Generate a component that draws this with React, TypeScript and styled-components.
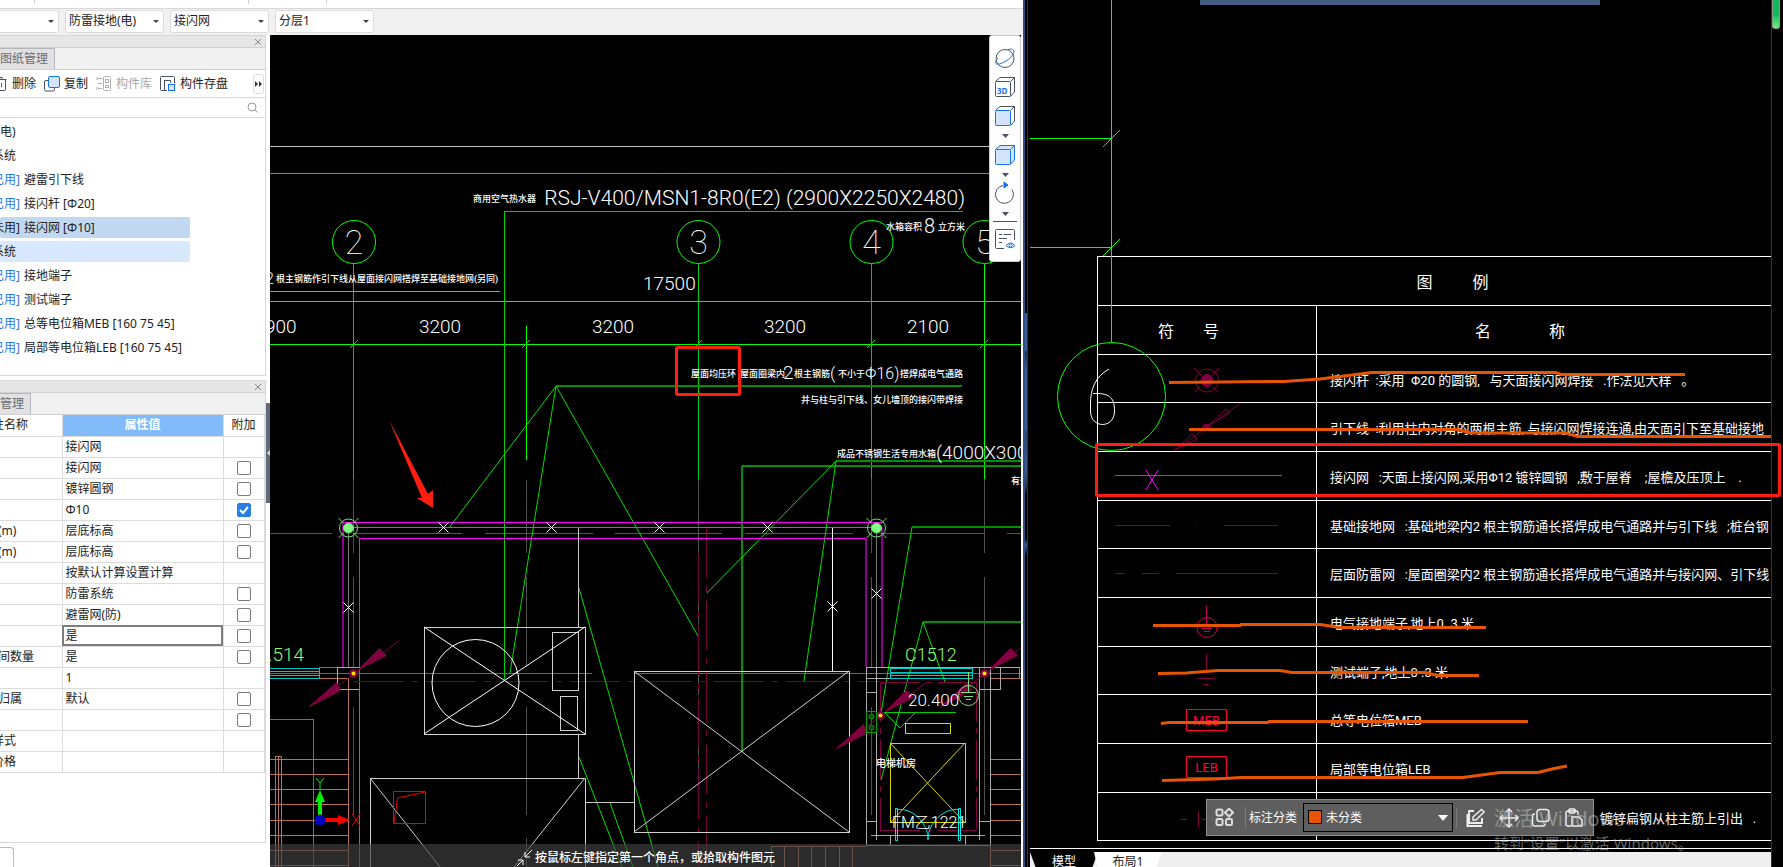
import React from "react";
import styled, { createGlobalStyle, css } from "styled-components";

const UI = `"Noto Sans", "Noto Sans CJK SC", sans-serif`;
const CAD = `Roboto, "Noto Sans CJK SC", sans-serif`;
const G = "#00ff00";
const GD = "#009000";
const GM = "#00c000";

const GlobalStyle = createGlobalStyle`
  * { box-sizing: border-box; }
  body { margin: 0; background: #000; font: 12px/16px ${UI}; color: #222; overflow: hidden; }
  button, select, input { font: inherit; color: inherit; margin: 0; padding: 0; }
`;

const Desktop = styled.div`
  display: grid;
  grid-template-columns: minmax(0, 1023fr) 5px minmax(0, 743fr) 12px;
  height: 100vh;
  overflow: hidden;
  background: #000;
  position: relative;
`;

/* ---------- modelling application ---------- */

const Modeler = styled.section`
  display: grid;
  grid-template-rows: 35px minmax(0, 1fr);
  min-width: 0;
  background: #fff;
`;

const TopBar = styled.header`
  display: flex;
  flex-direction: column;
  background: #f1f1f1;
`;

const RibbonEdge = styled.div`
  display: flex;
  height: 9px;
  background: #fff;
  border-bottom: 1px solid #d6d6d6;
`;

const RibbonCell = styled.span<{ $w: number }>`
  width: ${(p) => p.$w}px;
  height: 4px;
  border-right: 1px solid #cfcfcf;
`;

const FilterRow = styled.div`
  display: flex;
  gap: 6px;
  padding-top: 1px;
  margin-left: -40px;
`;

const Field = styled.label`
  position: relative;
  display: block;
`;

const Select = styled.select`
  appearance: none;
  width: 99px;
  height: 23px;
  padding: 0 16px 1px 3px;
  border: 1px solid #dcdcdc;
  border-radius: 3px;
  background: #fff;
`;

const Caret = styled.i<{ $top?: number }>`
  position: absolute;
  right: 5px;
  top: ${(p) => p.$top ?? 10}px;
  border: 3px solid transparent;
  border-top: 3px solid #444;
  border-bottom: 0;
  pointer-events: none;
`;

const Work = styled.div`
  display: grid;
  grid-template-columns: 266px 4px minmax(0, 1fr) 2px;
  min-height: 0;
`;

const Dock = styled.aside`
  display: flex;
  flex-direction: column;
  gap: 4px;
  min-height: 0;
  overflow: hidden;
`;

const Panel = styled.section<{ $h: number }>`
  display: flex;
  flex-direction: column;
  flex: 0 0 ${(p) => p.$h}px;
  border: 1px solid #d6d6d6;
  border-left: 0;
  overflow: hidden;
`;

const PanelTitle = styled.div`
  display: flex;
  justify-content: flex-end;
  align-items: center;
  height: 12px;
  flex: none;
  padding-right: 3px;
  background: #e6e6e6;
  border-bottom: 1px solid #d0d0d0;
`;

const IconButton = styled.button`
  display: inline-flex;
  border: 0;
  background: none;
`;

const Tabs = styled.div`
  display: flex;
  height: 22px;
  flex: none;
  background: #f1f1f1;
  border-bottom: 1px solid #d0d0d0;
`;

const Tab = styled.button<{ $w: number }>`
  width: ${(p) => p.$w}px;
  padding: 0 8px 0 0;
  text-align: right;
  white-space: nowrap;
  border: 0;
  border-right: 1px solid #b5b5bb;
  border-top: 1px solid #b5b5bb;
  background: #e1e1e3;
  color: #6c6c6c;
`;

const ToolRow = styled.div`
  display: flex;
  align-items: center;
  height: 28px;
  flex: none;
  border-bottom: 1px solid #d8d8d8;
`;

const Tool = styled.button<{ $w: number; $off?: boolean }>`
  display: flex;
  align-items: center;
  justify-content: space-between;
  flex: none;
  width: ${(p) => p.$w}px;
  margin-right: 8px;
  border: 0;
  background: none;
  white-space: nowrap;
  color: ${(p) => (p.$off ? "#a8a8a8" : "#222")};
  svg { flex: none; }
`;

const More = styled.button`
  width: 11px;
  height: 20px;
  margin-left: auto;
  margin-right: 1px;
  border: 1px solid #ddd;
  border-radius: 3px;
  background: #fff;
  display: flex;
  align-items: center;
  justify-content: center;
`;

const Search = styled.label`
  display: flex;
  align-items: center;
  height: 20px;
  flex: none;
  padding-right: 7px;
  border-bottom: 1px solid #d8d8d8;
  input { flex: 1; min-width: 0; border: 0; outline: 0; background: none; }
`;

const Tree = styled.ul`
  list-style: none;
  margin: 0;
  padding: 3px 0 0;
  display: flex;
  flex-direction: column;
  gap: 3px;
`;

const TreeItem = styled.li<{ $bg?: string; $cut?: boolean }>`
  width: 190px;
  height: 21px;
  line-height: 21px;
  text-indent: ${(p) => (p.$cut ? "-8px" : "0")};
  white-space: pre;
  overflow: hidden;
  border-radius: 2px;
  background: ${(p) => p.$bg ?? "none"};
`;

const Used = styled.span<{ $dim?: boolean }>`
  margin-right: 4px;
  color: ${(p) => (p.$dim ? "inherit" : "#2f77e6")};
`;

const PropTable = styled.table`
  width: 264px;
  table-layout: fixed;
  border-collapse: collapse;
  th, td {
    height: 21px;
    padding: 0 3px;
    border: 1px solid #dcdcdc;
    border-left: 0;
    font-weight: 400;
    line-height: 16px;
    white-space: nowrap;
    overflow: hidden;
    text-align: left;
  }
  th { border-top: 0; }
  tr > :last-child { text-align: center; padding: 0; }
`;

const ValueHead = styled.th`
  && { background: #82bbfa; color: #fff; text-align: center; font-weight: 700; }
`;

const NameCell = styled.th<{ $cut?: boolean }>`
  && { padding: 0; text-indent: ${(p) => (p.$cut ? "-8px" : "-2px")}; }
`;

const ValueCell = styled.td<{ $active?: boolean }>`
  ${(p) => p.$active && css`&& { outline: 2px solid #7d7d7d; outline-offset: -2px; }`}
`;

const Check = styled.input`
  appearance: none;
  width: 14px;
  height: 14px;
  border: 1px solid #7b7b7b;
  border-radius: 2px;
  background: #fff;
  &:checked { border-color: #2a7de1; background: #2a7de1; }
`;

const CheckWrap = styled.label`
  display: grid;
  justify-content: center;
  align-items: center;
  > * { grid-area: 1 / 1; }
  svg { margin-left: 1px; pointer-events: none; }
`;

const BottomStub = styled.div`
  width: 14px;
  flex: 1;
  border: 1px solid #bbb;
  border-left: 0;
  border-bottom: 0;
  border-radius: 0 4px 0 0;
`;

const Gutter = styled.div`
  padding-top: 368px;
`;

const Splitter = styled.button`
  display: flex;
  align-items: center;
  width: 4px;
  height: 100px;
  border: 0;
  background: #5f6b7b;
`;

const Viewport = styled.main`
  position: relative;
  min-width: 0;
  overflow: hidden;
  background: #000;
`;

const Drawing = styled.svg`
  display: block;
  position: absolute;
  inset: 0;
  width: 100%;
  height: 100%;
  pointer-events: none;
  font-family: ${CAD};
`;

const ViewTools = styled.nav`
  position: absolute;
  top: 0;
  right: 0;
  width: 32px;
  height: 227px;
  display: flex;
  flex-direction: column;
  align-items: center;
  padding-top: 12px;
  background: #fff;
  border: 1px solid #ccc;
  border-radius: 3px;
`;

const ViewButton = styled.button<{ $h: number }>`
  display: flex;
  justify-content: center;
  align-items: flex-start;
  width: 24px;
  height: ${(p) => p.$h}px;
  flex: none;
  border: 0;
  background: none;
`;

const ViewRule = styled.hr`
  width: 24px;
  height: 1px;
  flex: none;
  margin: 0 0 7px;
  border: 0;
  background: #4a5263;
`;

const Prompt = styled.footer`
  position: absolute;
  left: 0;
  right: 0;
  bottom: 0;
  height: 23px;
  display: flex;
  align-items: center;
  justify-content: center;
  gap: 2px;
  padding-top: 4px;
  background: rgba(66, 66, 66, 0.66);
  color: #fff;
  font-weight: 500;
`;

/* ---------- drawing viewer ---------- */

const Gap = styled.div`
  border-left: 2px solid #2b4f86;
  border-right: 1px solid #333;
  background: linear-gradient(#000 0 313px, #3c5b92 313px 350px, #1d2c48 352px, #3c5b92 370px 430px, #2d4369 432px, #3c5b92 470px, #333 487px, #000 495px 538px, #3c5b92 545px, #000 556px);
`;

const Viewer = styled.section`
  position: relative;
  display: grid;
  grid-template-rows: minmax(0, 1fr) 15px;
  min-width: 0;
  margin-left: 2px;
`;

const Sheet = styled.div`
  position: relative;
  overflow: hidden;
  background: #000;
  border-bottom: 3px solid #000;
`;

const SheetEdge = styled.div`
  position: absolute;
  left: 0;
  right: 0;
  bottom: 0;
  height: 1px;
  background: #fff;
`;

const Legend = styled.table`
  position: absolute;
  left: 67px;
  top: 256px;
  width: 712px;
  table-layout: fixed;
  border-collapse: collapse;
  color: #fff;
  font: 13px/20px ${CAD};
  tr { height: 49px; }
  tbody tr:nth-child(3n + 1) { height: 48px; }
  th, td { border: 1px solid #fff; padding: 4px 0 0 13px; font-weight: 400; text-align: left; white-space: pre; }
  td:first-child { padding: 0; }
`;

const Spread = styled.span<{ $gap: number; $shift?: number }>`
  display: flex;
  justify-content: center;
  gap: ${(p) => p.$gap}px;
  padding-right: ${(p) => p.$shift ?? 0}px;
  font-size: 16px;
`;

const LegendText = styled.td<{ $indent?: number }>`
  && { padding-left: ${(p) => p.$indent ?? 13}px; }
`;

const LayoutTabs = styled.nav`
  display: flex;
  overflow: hidden;
  background: #efefef;
`;

const LayoutTab = styled.button<{ $on?: boolean }>`
  width: 68px;
  height: 24px;
  flex: none;
  padding: 0 0 4px;
  border: 0;
  margin-right: -4px;
  background: ${(p) => (p.$on ? "#000" : "#fff")};
  color: ${(p) => (p.$on ? "#fff" : "#222")};
  clip-path: ${(p) => (p.$on ? "polygon(0 0, 100% 0, 87% 100%, 13% 100%)" : "polygon(0 0, 100% 0, 87% 100%, 8% 100%)")};
`;

const Floating = styled.div`
  position: absolute;
  right: 177px;
  bottom: 31px;
  width: 388px;
  height: 37px;
  display: flex;
  align-items: center;
  padding: 0 9px 0 8px;
  background: #5e5e5e;
  border: 1px solid #8c8c8c;
  color: #fff;
`;

const Divider = styled.span<{ $wide?: boolean }>`
  width: 1px;
  height: 21px;
  margin: ${(p) => (p.$wide ? "0 3px 0 11px" : "0")};
  background: #7c7c7c;
`;

const ClassPicker = styled.div`
  position: relative;
  width: 150px;
  margin: 0 3px 0 6px;
  select {
    appearance: none;
    width: 150px;
    height: 29px;
    padding: 0 20px 0 22px;
    border: 1px solid #000;
    background: #5e5e5e;
    color: #fff;
  }
`;

const Swatch = styled.i`
  position: absolute;
  left: 5px;
  top: 7px;
  width: 14px;
  height: 14px;
  border: 1px solid #000;
  background: #e85400;
`;

const BigCaret = styled(Caret)`
  border-width: 6px 5px 0;
  border-top-color: #fff;
`;

const FloatIcons = styled.div`
  display: flex;
  flex: 1;
  justify-content: space-between;
  padding-left: 9px;
`;

const Watermark = styled.div`
  position: absolute;
  right: 70px;
  bottom: 14px;
  width: 207px;
  color: rgba(200, 200, 200, 0.5);
  font: 15px/20px ${UI};
  pointer-events: none;
`;

const WatermarkTitle = styled.div`
  font-size: 20px;
  line-height: 28px;
`;

const Edge = styled.div`
  border-left: 1px solid #333;
  display: flex;
  justify-content: flex-start;
`;

const GreenGrip = styled.div`
  width: 8px;
  height: 29px;
  border: 1px solid #8a9a8a;
  border-top: 0;
  border-radius: 0 0 3px 3px;
  background: linear-gradient(#12b85a 50%, #6df07a);
`;

const TopStrip = styled.div`
  position: absolute;
  left: 170px;
  right: 171px;
  top: 0;
  height: 5px;
  background: #475c85;
`;

const Highlight = styled.div`
  position: absolute;
  left: 65px;
  right: -10px;
  top: 443px;
  height: 54px;
  border: 3px solid #ff1e0f;
  border-radius: 2px;
`;

/* ---------- drawing primitives ---------- */

type Seg = [number, number, number, number];

const Lines = ({ c, w = 1, d, dash, soft }: { c: string; w?: number; d: Seg[]; dash?: string; soft?: boolean }) => (
  <path
    d={d.map(([a, b, x, y]) => `M${a} ${b}L${x} ${y}`).join("")}
    stroke={c}
    strokeWidth={w}
    strokeDasharray={dash}
    fill="none"
    shapeRendering={soft ? undefined : "crispEdges"}
  />
);

const Label = ({ x, y, s = 9, end, c = "#fff", light, children }: {
  x: number; y: number; s?: number; end?: boolean; c?: string; light?: boolean; children: string;
}) => (
  <text x={x} y={y} fontSize={s} fill={c} textAnchor={end ? "end" : "start"} fontWeight={light ? 300 : 500}>
    {children}
  </text>
);

const Cross = ({ x, y }: { x: number; y: number }) => (
  <path d={`M${x - 5} ${y - 5}l10 10m0 -10l-10 10`} stroke="#fff" fill="none" />
);

const Node = ({ x, y }: { x: number; y: number }) => (
  <g stroke="#70e070" fill="none">
    <path d={`M${x - 10} ${y - 10}l5 5m10 10l5 5m0 -20l-5 5m-10 10l-5 5`} />
    <circle cx={x} cy={y} r="9" />
    <circle cx={x} cy={y} r="5" fill="#80ff80" />
  </g>
);

const DownLead = ({ x, y }: { x: number; y: number }) => (
  <g transform={`translate(${x} ${y})`} fill="#800040" stroke="#800040">
    <path d="M46 -33L-44 33" fill="none" />
    <path d="M5 -4L26 -25L33 -18ZM-44 33L-17 9L-13 17Z" />
    <circle r="4" />
    <circle r="2" fill="#ffe000" stroke="none" />
  </g>
);

const stairs = [759.5, 774.5, 789.5, 804.5, 820.5, 835.5, 850.5, 865.5];
const axes: [string, number][] = [["2", 354], ["3", 698.5], ["4", 871.5], ["5", 984.5]];

const Plan = () => (
  <Drawing role="img" aria-label="屋顶防雷平面图">
    <g transform="translate(-270 -35)">
      <Lines c="#c0c0c0" d={[[270, 146.5, 1022, 146.5]]} />
      <Lines c="#808080" d={[[270, 173.5, 1022, 173.5]]} />
      <Lines c="#505050" d={[[353.5, 479, 353.5, 553], [353.5, 577, 353.5, 667], [353.5, 707, 353.5, 815], [526.5, 480, 526.5, 553], [526.5, 577, 526.5, 667], [526.5, 707, 526.5, 815], [526.5, 838, 526.5, 867], [698.5, 479, 698.5, 553], [698.5, 577, 698.5, 695], [698.5, 707, 698.5, 815], [871.5, 479, 871.5, 553], [871.5, 577, 871.5, 667], [871.5, 707, 871.5, 815], [984.5, 479, 984.5, 553], [984.5, 577, 984.5, 815]]} />
      <Lines c="#555" d={[[270, 533.5, 332, 533.5], [354, 533.5, 462, 533.5], [485, 533.5, 593, 533.5], [615, 533.5, 722, 533.5], [745, 533.5, 853, 533.5], [880, 533.5, 984, 533.5], [1007, 533.5, 1022, 533.5]]} />
      <Lines c="#777" d={[[348, 527.5, 876, 527.5], [348.5, 528, 348.5, 667], [876.5, 528, 876.5, 667], [359.5, 667, 359.5, 867], [319, 667.5, 359, 667.5]]} />
      <Lines c="#666" d={[[270, 673.5, 592, 673.5], [634, 673.5, 1022, 673.5]]} />
      <Lines c="#700038" dash="50 8 6 8" d={[[354, 681.5, 880, 681.5], [706.5, 528, 706.5, 867], [698.5, 553, 698.5, 867]]} />

      <Lines c={G} d={[[270, 301.5, 1022, 301.5], [270, 344.5, 1022, 344.5]]} />
      <Lines c="#00d000" d={[[504.5, 211, 504.5, 680], [505, 211.5, 963, 211.5], [353.5, 264, 353.5, 479], [698.5, 264, 698.5, 479], [871.5, 264, 871.5, 479]]} />
      <Lines c={G} d={[[270, 291.5, 500, 291.5], [526.5, 326, 526.5, 460], [984.5, 264, 984.5, 479]]} />
      <Lines c={GD} w={2} d={[[556, 386, 962, 386], [742, 466, 1022, 466], [742, 466, 742, 752], [836, 461, 1022, 461], [923, 622, 1022, 622], [912, 527, 1022, 527]]} />
      <Lines soft c="#00e000" d={[[350, 348, 358, 340], [522, 348, 530, 340], [694, 348, 702, 340], [867, 348, 875, 340], [980, 348, 988, 340], [556, 386, 449, 528], [556, 386, 510, 673], [556, 386, 698, 636], [836, 461, 707, 593], [836, 461, 804, 681], [912, 527, 881, 713], [923, 622, 881, 780], [923, 622, 945, 682], [579, 588, 658, 867], [579, 757, 622, 867], [610, 803, 633, 867]]} />
      <Lines c={GM} d={[[270, 719.5, 313, 719.5], [313.5, 719, 313.5, 867]]} />
      {axes.map(([n, x]) => (
        <g key={n}>
          <circle cx={x} cy="242" r="21.5" fill="none" stroke={G} />
          <text x={x} y="254" fontSize="34" fontWeight="100" fill="#fff" textAnchor="middle">{n}</text>
        </g>
      ))}

      <Lines c="#ff00ff" d={[[343, 522.5, 882, 522.5], [359, 538.5, 866, 538.5], [359.5, 538, 359.5, 667]]} />
      <Lines c="#8b008b" w={2} d={[[343, 522, 343, 667], [866, 538, 866, 667], [882, 527, 882, 667]]} />
      <Lines c="#fff" d={[[832.5, 528, 832.5, 671]]} />
      <Lines c="#c8c8c8" d={[[578.5, 528, 578.5, 627], [578.5, 735, 578.5, 778], [585, 802.5, 634, 802.5]]} />

      <g fill="none" stroke="#d0d0d0">
        <rect x="424.5" y="627.5" width="161" height="107" />
        <rect x="552.5" y="632.5" width="26" height="58" />
        <rect x="560.5" y="696.5" width="17" height="34" />
        <path d="M424 627L585 734M585 627L424 734" stroke="#fff" />
        <circle cx="475.5" cy="683" r="43.5" stroke="#fff" />
        <path d="M370.5 867V778.5H585.5V867M370 778L440 867M585 778L514 867" />
        <rect x="634.5" y="671.5" width="215" height="161" />
        <path d="M634 671L849 832M849 671L634 832" />
      </g>
      <path d="M393.5 791.5h32v32h-32zM425 792L397.5 798L394 823" fill="none" stroke="#f00000" />

      <Lines c="#00c8c8" d={[[270, 668.5, 319, 668.5], [270, 671.5, 319, 671.5], [270, 675.5, 319, 675.5], [270, 678.5, 319, 678.5], [319.5, 668, 319.5, 679], [890, 668.5, 972, 668.5], [890, 672.5, 972, 672.5], [890, 675.5, 972, 675.5], [890, 678.5, 972, 678.5], [890.5, 667, 890.5, 679], [972.5, 667, 972.5, 679], [1019.5, 667, 1019.5, 679]]} />
      <Lines c="#b87058" d={[[319, 678.5, 348, 678.5], [348.5, 678, 348.5, 867], [990.5, 678, 990.5, 867], [990, 678.5, 1022, 678.5], [275.5, 756, 275.5, 867], [278.5, 756, 278.5, 867], [281.5, 756, 281.5, 867], [275, 756.5, 282, 756.5], ...stairs.flatMap((y): Seg[] => [[270, y, 348, y], [990, y, 1022, y]])]} />
      <Lines c="#b87058" d={[771, 784, 798, 811, 825, 839, 852].map((x): Seg => [x + 0.5, 846, x + 0.5, 867]).concat([[771, 846.5, 866, 846.5]])} />
      <Lines c="#aaa" d={[[337, 667.5, 359, 667.5], [337, 689.5, 359, 689.5], [337.5, 667, 337.5, 690], [866, 667.5, 1020, 667.5], [866, 678.5, 890, 678.5], [866.5, 667, 866.5, 846], [876.5, 667, 876.5, 840], [979.5, 667, 979.5, 840], [990.5, 667, 990.5, 846], [1000.5, 667, 1000.5, 690], [979, 689.5, 1001, 689.5], [866, 692.5, 877, 692.5], [866, 821.5, 877, 821.5], [979, 821.5, 990, 821.5], [871, 835.5, 985, 835.5], [866, 845.5, 990, 845.5], [890.5, 835, 890.5, 845], [965.5, 835, 965.5, 845]]} />
      <Lines c="#800040" dash="40 6 6 6" d={[[880.5, 682, 880.5, 830], [880, 682.5, 976, 682.5], [976.5, 682, 976.5, 830], [880, 830.5, 976, 830.5]]} />
      <g fill="none" stroke="#d8d800">
        <rect x="905.5" y="723.5" width="45" height="10" />
        <rect x="890.5" y="743.5" width="75" height="79" />
        <path d="M890 743L965 823M965 743L890 823" />
      </g>
      <DownLead x={353.5} y={673.5} />
      <DownLead x={880.5} y={715.5} />
      <DownLead x={984.5} y={673.5} />
      <path d="M895.5 808.5h2v32h-2zM958.5 808.5h2v32h-2zM898 809.5C912 808 928 822 928 840C928 822 944 808 959 809.5" fill="none" stroke="#00e8e8" />
      <g fill="none" stroke="#00a000">
        <rect x="866.5" y="711.5" width="10" height="21" />
        <circle cx="871.5" cy="716.5" r="2.5" fill="#005000" />
        <circle cx="871.5" cy="727.5" r="2.5" fill="#005000" />
        <path d="M884 712.5H956M884 712L900 728L916 712" stroke="#00d000" />
      </g>
      <g fill="none" stroke="#80e080">
        <circle cx="968.5" cy="695.5" r="10" />
        <path d="M968.5 672V692M961 692.5H976M964 696.5H973M966 699.5H971" />
      </g>

      {[443, 551, 659, 767].map((x) => <Cross key={x} x={x + 0.5} y={527.5} />)}
      <Cross x={348.5} y={607.5} />
      <Cross x={832.5} y={606.5} />
      <Cross x={876.5} y={593.5} />
      <Node x={348.5} y={528} />
      <Node x={876.5} y={528} />

      <Label x={473} y={202}>商用空气热水器</Label>
      <Label light x={965} y={205} s={21} end>RSJ-V400/MSN1-8R0(E2) (2900X2250X2480)</Label>
      <Label x={886} y={230}>水箱容积</Label>
      <Label light x={924} y={233} s={20}>8</Label>
      <Label x={938} y={230}>立方米</Label>
      <Label light x={265} y={284} s={16}>2</Label>
      <Label x={276} y={282}>根主钢筋作引下线从屋面接闪网搭焊至基础接地网(另同)</Label>
      <Label light x={643} y={290} s={19}>17500</Label>
      <Label light x={265} y={333} s={19}>900</Label>
      {[419, 592, 764].map((x) => <Label key={x} light x={x} y={333} s={19}>3200</Label>)}
      <Label light x={907} y={333} s={19}>2100</Label>
      <Label x={691} y={377}>屋面均压环</Label>
      <Label x={740} y={377}>屋面圈梁内</Label>
      <Label light x={783} y={379} s={19}>2</Label>
      <Label x={794} y={377}>根主钢筋</Label>
      <Label light x={830} y={379} s={17}>(</Label>
      <Label x={838} y={377}>不小于</Label>
      <Label light x={865} y={379} s={16}>Φ16)</Label>
      <Label x={963} y={377} end>搭焊成电气通路</Label>
      <Label x={963} y={403} end>并与柱与引下线、女儿墙顶的接闪带焊接</Label>
      <Label x={837} y={457}>成品不锈钢生活专用水箱</Label>
      <Label light x={936} y={459} s={19}>(4000X3000)</Label>
      <Label x={1011} y={484}>有效</Label>
      <Label light x={268} y={661} s={19} c="#90ff70">.514</Label>
      <Label light x={905} y={661} s={18} c="#90ff70">C1512</Label>
      <Label light x={908} y={706} s={17}>20.400</Label>
      <Label x={876} y={767} s={10}>电梯机房</Label>
      <Label light x={892} y={828} s={16}>FM乙1221</Label>

      <path d="M320 820V800" stroke="#00f000" strokeWidth="4" />
      <path d="M320 790L325 802H315Z" fill="#00f000" />
      <path d="M320 820H339" stroke="#f00" strokeWidth="4" />
      <path d="M350 820L338 815V825Z" fill="#f00" />
      <circle cx="320" cy="820" r="5.5" fill="#0000c0" />
      <path d="M316 778L320 783L324 778M320 783V789" stroke="#00f000" fill="none" />
      <path d="M352 814L360 826M360 814L352 826" stroke="#f00000" fill="none" />

      <path d="M389 420L428 494L433 490V508L417 498L422 498Z" fill="#ff1e0f" />
      <rect x="676.5" y="347.5" width="63" height="47" rx="1" fill="none" stroke="#ff1e0f" strokeWidth="3" />
    </g>
  </Drawing>
);

const Markup = () => (
  <Drawing aria-hidden="true">
    <g transform="translate(-1030 0)" fill="none">
      <Lines c={G} d={[[1111.5, 0, 1111.5, 342], [1030, 138.5, 1111, 138.5], [1030, 247.5, 1111, 247.5]]} />
      <path d="M1103 147L1120 130M1103 256L1120 239" stroke={G} />
      <circle cx="1111.5" cy="396.5" r="54" stroke={G} />
      <path d="M1109 369C1095 377 1090.500 389 1090.500 404V411C1090.500 429 1114.500 429 1114.500 411C1114.500 396 1108 393 1093 393.500" stroke="#fff" />
      <g stroke="#800040">
        <circle cx="1207" cy="380.5" r="11.5" />
        <circle cx="1207" cy="380.5" r="6" fill="#800040" />
        <path d="M1194 368l7 7m12 12l5 5m1 -24l-7 7m-12 12l-5 5" />
        <path d="M1241 403L1174 451M1209 425L1226 409L1230 413L1209 425M1174 451L1192 434L1197 439L1180 448" />
        <path d="M1202 427a5 5 0 0 1 9 0z" fill="#800040" />
        <path d="M1115 525.5h55M1196 525.5h1M1224 525.5h54M1115 573.5h10M1142 573.5h17M1176 573.5h102" />
        <path d="M1206.5 654v17M1197 678.5h18M1203 684.5h6M1180 819.5h7M1198.5 811v16M1201 819.5h8" />
      </g>
      <path d="M1206.5 606v20M1201 628.5h11M1204 631.5h6" stroke="#c80064" />
      <circle cx="1207" cy="627.5" r="10" stroke="#c80064" />
      <path d="M1115 475.5H1282M1146 470L1158 490M1158 470L1146 490" stroke="#ff00ff" />
      <path d="M1186.5 709.5h40v21h-40zM1186.5 756.5h40v21h-40z" stroke="#ff0040" />
      <text x="1206.5" y="725" fontSize="13" fill="#ff0040" textAnchor="middle">MEB</text>
      <text x="1206.5" y="772" fontSize="13" fill="#ff0040" textAnchor="middle">LEB</text>
      <g stroke="#e85400" strokeWidth="3">
        <path d="M1169 382.5L1284 381.5L1320 379L1372 372.5H1556L1561 374.5H1685" />
        <path d="M1189 429.5H1458L1470 433H1565L1578 436.5H1771" />
        <path d="M1153 625.5H1240L1241 624.5H1320L1340 627.5H1486" />
        <path d="M1158 673.5L1186 673L1218 670.5H1280L1292 672.5H1425L1438 675.5H1479" />
        <path d="M1161 723.5L1169 722.5H1268L1269 721.5H1528" />
        <path d="M1162 780.5L1215 779L1242 777.5H1463L1500 772.5H1538L1552 769L1567 766" />
      </g>
    </g>
  </Drawing>
);

/* ---------- icons ---------- */

const CloseIcon = () => (
  <svg width="8" height="8" viewBox="0 0 8 8"><path d="M1 1l6 6M7 1L1 7" stroke="#8a8a8a" /></svg>
);
const dark = "#4a5263";
const blue = "#1473e6";

const CubeIcon = ({ front, all, label }: { front?: boolean; all?: boolean; label?: boolean }) => (
  <svg width="20" height="20" viewBox="0 0 20 20" fill="none" stroke={all ? blue : dark}>
    <path d="M.5 4.5L5 .5H19.5V15L15.5 19.5M15.5 4.5L19.5 .5" fill={all ? "#d2e3fa" : "none"} />
    <rect x=".5" y="4.5" width="15" height="15" rx="1" fill={front || all ? "#d2e3fa" : "#fff"} stroke={front || all ? blue : dark} />
    {label && <text x="2" y="17" fontSize="8" fontWeight="700" fill={blue} stroke="none" fontFamily="Noto Sans">3D</text>}
  </svg>
);
const SmallCaret = () => (
  <svg width="20" height="5" viewBox="0 0 20 5"><path d="M7 0H14L10.5 4Z" fill={dark} /></svg>
);

const statuses: { tag?: string; text: string; bg?: string; plain?: boolean; dim?: boolean }[] = [
  { text: "电)", plain: true },
  { text: "系统" },
  { tag: "已用]", text: "避雷引下线" },
  { tag: "已用]", text: "接闪杆 [Φ20]" },
  { tag: "未用]", text: "接闪网 [Φ10]", bg: "#c1d8f1", dim: true },
  { text: "系统", bg: "#d8e9fd" },
  { tag: "已用]", text: "接地端子" },
  { tag: "已用]", text: "测试端子" },
  { tag: "已用]", text: "总等电位箱MEB [160 75 45]" },
  { tag: "已用]", text: "局部等电位箱LEB [160 75 45]" },
];

const props: { name?: string; cut?: boolean; value?: string; box?: boolean; on?: boolean; active?: boolean }[] = [
  { value: "接闪网" },
  { value: "接闪网", box: true },
  { value: "镀锌圆钢", box: true },
  { value: "Φ10", box: true, on: true },
  { name: "(m)", value: "层底标高", box: true },
  { name: "(m)", value: "层底标高", box: true },
  { value: "按默认计算设置计算" },
  { value: "防雷系统", box: true },
  { value: "避雷网(防)", box: true },
  { value: "是", box: true, active: true },
  { name: "间数量", value: "是", box: true },
  { value: "1" },
  { name: "归属", value: "默认", box: true },
  { box: true },
  { name: "样式", cut: true },
  { name: "价格", cut: true },
];

const legendRows: { text: string; indent?: number }[] = [
  { text: "接闪杆  :采用  Φ20 的圆钢,   与天面接闪网焊接   .作法见大样   。" },
  { text: "引下线  :利用柱内对角的两根主筋, 与接闪网焊接连通,由天面引下至基础接地" },
  { text: "接闪网   :天面上接闪网,采用Φ12 镀锌圆钢   ,敷于屋脊    ;屋檐及压顶上    ." },
  { text: "基础接地网   :基础地梁内2 根主钢筋通长搭焊成电气通路并与引下线   ;桩台钢" },
  { text: "层面防雷网   :屋面圈梁内2 根主钢筋通长搭焊成电气通路并与接闪网、引下线" },
  { text: "电气接地端子,地上0 .3 米" },
  { text: "测试端子,地上0 .3 米" },
  { text: "总等电位箱MEB" },
  { text: "局部等电位箱LEB" },
  { text: "镀锌扁钢从柱主筋上引出   .", indent: 283 },
];

export default function App() {
  return (
    <>
      <GlobalStyle />
      <Desktop>
        <Modeler>
          <TopBar>
            <RibbonEdge>
              <RibbonCell $w={35} />
              <RibbonCell $w={214} />
              <RibbonCell $w={78} />
            </RibbonEdge>
            <FilterRow>
              {["", "防雷接地(电)", "接闪网", "分层1"].map((v, i) => (
                <Field key={i}>
                  <Select aria-label={`筛选${i + 1}`} defaultValue={v}><option>{v}</option></Select>
                  <Caret />
                </Field>
              ))}
            </FilterRow>
          </TopBar>
          <Work>
            <Dock>
              <Panel $h={341}>
                <PanelTitle><IconButton aria-label="关闭"><CloseIcon /></IconButton></PanelTitle>
                <Tabs><Tab $w={55}>图纸管理</Tab></Tabs>
                <ToolRow>
                  <Tool $w={36}>
                    <svg width="7" height="16" viewBox="0 0 7 16" fill="none" stroke={dark}><path d="M0 3.5H6.5M5.5 4V13.5a1 1 0 0 1 -1 1H0M0 1.5H2V3" /><path d="M1.5 7V11" stroke="#e02020" /></svg>
                    删除
                  </Tool>
                  <Tool $w={44}>
                    <svg width="16" height="16" viewBox="0 0 16 16" fill="none" stroke={dark}><path d="M4 4.5H2A1.5 1.5 0 0 0 .5 6V13.5A1.5 1.5 0 0 0 2 15H9A1.5 1.5 0 0 0 10.5 13.5V12" /><rect x="4.5" y=".5" width="11" height="11" rx="1.5" fill="#d2e3fa" stroke={blue} /></svg>
                    复制
                  </Tool>
                  <Tool $w={56} $off>
                    <svg width="16" height="16" viewBox="0 0 16 16" fill="none" stroke="#b0b0b0"><rect x="7.5" y=".5" width="7" height="14" rx="1" /><rect x="9.5" y="3.5" width="3" height="3" /><rect x="9.5" y="9.5" width="3" height="2" /><path d="M2 2.5H6M2 7.5H6M2 12.5H6" /><circle cx="1.5" cy="2.5" r="1" /><circle cx="1.5" cy="12.5" r="1" /></svg>
                    构件库
                  </Tool>
                  <Tool $w={68}>
                    <svg width="16" height="16" viewBox="0 0 16 16" fill="none" stroke={dark}><path d="M7 14.5H1.5A1 1 0 0 1 .5 13.5V1.5A1 1 0 0 1 1.5 .5H13.5A1 1 0 0 1 14.5 1.5V7M4.5 4V14M4.5 4.5H10.5V7" /><rect x="8.5" y="8.5" width="6" height="6" fill="#d2e3fa" stroke={blue} /></svg>
                    构件存盘
                  </Tool>
                  <More aria-label="更多"><svg width="7" height="6" viewBox="0 0 7 6"><path d="M0 0L3 3L0 6ZM4 0L7 3L4 6Z" fill="#333" /></svg></More>
                </ToolRow>
                <Search>
                  <input aria-label="搜索构件" />
                  <svg width="11" height="11" viewBox="0 0 11 11" fill="none" stroke="#999"><circle cx="5" cy="5" r="4" /><path d="M8 8L10.5 10.5" /></svg>
                </Search>
                <Tree>
                  {statuses.map((s, i) => (
                    <TreeItem key={i} $bg={s.bg} $cut={!s.plain}>
                      {s.tag && <Used $dim={s.dim}>{s.tag}</Used>}{s.text}
                    </TreeItem>
                  ))}
                </Tree>
              </Panel>
              <Panel $h={463}>
                <PanelTitle><IconButton aria-label="关闭"><CloseIcon /></IconButton></PanelTitle>
                <Tabs><Tab $w={31}>管理</Tab></Tabs>
                <PropTable>
                  <colgroup><col width="62" /><col width="161" /><col width="41" /></colgroup>
                  <thead>
                    <tr><NameCell scope="col" $cut>性名称</NameCell><ValueHead scope="col">属性值</ValueHead><th scope="col">附加</th></tr>
                  </thead>
                  <tbody>
                    {props.map((p, i) => (
                      <tr key={i}>
                        <NameCell scope="row" $cut={p.cut}>{p.name}</NameCell>
                        <ValueCell $active={p.active}>{p.value}</ValueCell>
                        <td>
                          {p.box && (
                            <CheckWrap>
                              <Check type="checkbox" defaultChecked={p.on} aria-label={`附加 ${p.value ?? ""}`} />
                              {p.on && <svg width="12" height="12" viewBox="0 0 12 12" fill="none" stroke="#fff" strokeWidth="2"><path d="M2 6L5 9L10 3" /></svg>}
                            </CheckWrap>
                          )}
                        </td>
                      </tr>
                    ))}
                  </tbody>
                </PropTable>
              </Panel>
              <BottomStub />
            </Dock>
            <Gutter>
              <Splitter aria-label="收起面板"><svg width="4" height="6" viewBox="0 0 4 6"><path d="M4 0V6L1 3Z" fill="#ddd" /></svg></Splitter>
            </Gutter>
            <Viewport>
              <Plan />
              <ViewTools aria-label="视图工具">
                <ViewButton $h={29} aria-label="动态观察">
                  <svg width="22" height="20" viewBox="0 0 22 20" fill="none" stroke={dark}><circle cx="11" cy="10.5" r="9" /><path d="M4 10C-2 17 4 18 12 13C21 8 23 -1 14 1.5" stroke={blue} /></svg>
                </ViewButton>
                <ViewButton $h={29} aria-label="三维"><CubeIcon label /></ViewButton>
                <ViewButton $h={28} aria-label="俯视"><CubeIcon front /></ViewButton>
                <ViewButton $h={11} aria-label="俯视选项"><SmallCaret /></ViewButton>
                <ViewButton $h={28} aria-label="线框"><CubeIcon all /></ViewButton>
                <ViewButton $h={9} aria-label="线框选项"><SmallCaret /></ViewButton>
                <ViewButton $h={30} aria-label="旋转">
                  <svg width="20" height="22" viewBox="0 0 20 22" fill="none" stroke={dark}><path d="M8 3.5A9 9 0 1 0 17 7.5" /><path d="M9 0L13 3L9 6Z" fill={blue} stroke={blue} /></svg>
                </ViewButton>
                <ViewButton $h={9} aria-label="旋转选项"><SmallCaret /></ViewButton>
                <ViewRule />
                <ViewButton $h={22} aria-label="显示设置">
                  <svg width="20" height="21" viewBox="0 0 20 21" fill="none" stroke={dark}><path d="M9 19.5H1.5A1 1 0 0 1 .5 18.5V1.5A1 1 0 0 1 1.5 .5H18.5A1 1 0 0 1 19.5 1.5V11M4 5.5H7M8.5 5.5H16M4 9.5H12M4 13.5H7" /><path d="M11 16.5Q15.5 11.5 20 16.5Q15.5 21 11 16.5Z" stroke={blue} /><circle cx="15.5" cy="16.5" r="1.5" stroke={blue} /></svg>
                </ViewButton>
              </ViewTools>
              <Prompt>
                <svg width="17" height="18" viewBox="0 0 17 18" fill="none" stroke="#fff"><path d="M16 1L9 8M9 3V8H14M1 17L7 11M2 11H7V16" /></svg>
                按鼠标左键指定第一个角点，或拾取构件图元
              </Prompt>
            </Viewport>
          </Work>
        </Modeler>
        <Gap />
        <Viewer>
          <Sheet>
            <Legend>
              <colgroup><col width="219" /><col /></colgroup>
              <thead>
                <tr><th colSpan={2}><Spread $gap={40} $shift={14}><span>图</span><span>例</span></Spread></th></tr>
                <tr>
                  <th><Spread $gap={29} $shift={50}><span>符</span><span>号</span></Spread></th>
                  <th><Spread $gap={58} $shift={98}><span>名</span><span>称</span></Spread></th>
                </tr>
              </thead>
              <tbody>
                {legendRows.map((r) => (
                  <tr key={r.text}><td /><LegendText $indent={r.indent}>{r.text}</LegendText></tr>
                ))}
              </tbody>
            </Legend>
            <Markup />
            <TopStrip />
            <SheetEdge />
          </Sheet>
          <LayoutTabs>
            <LayoutTab $on>模型</LayoutTab>
            <LayoutTab>布局1</LayoutTab>
          </LayoutTabs>
          <Highlight />
          <Floating>
            <IconButton aria-label="分类管理">
              <svg width="19" height="19" viewBox="0 0 19 19" fill="none" stroke="#ddd" strokeWidth="2"><rect x="1.5" y="1.5" width="6" height="6" rx="1.5" /><path d="M14 0.800L18 4.500L14 8.500L10 4.500Z" /><rect x="1.5" y="11" width="6" height="6" rx="1.5" /><rect x="11" y="11" width="6" height="6" rx="1.5" /></svg>
            </IconButton>
            <Divider $wide />
            <label htmlFor="category">标注分类</label>
            <ClassPicker>
              <select id="category" defaultValue="未分类"><option>未分类</option></select>
              <Swatch />
              <BigCaret $top={12} />
            </ClassPicker>
            <Divider />
            <FloatIcons>
              <IconButton aria-label="编辑"><svg width="20" height="20" viewBox="0 0 20 20" fill="none" stroke="#eee" strokeWidth="2"><path d="M8 3H5a2 2 0 0 0 -2 0V15H16V10M1.5 6V18H16" /><path d="M7 9L15.5 1.5L18 4L10 12H7Z" strokeWidth="1.5" /></svg></IconButton>
              <IconButton aria-label="移动"><svg width="20" height="20" viewBox="0 0 20 20" fill="none" stroke="#eee" strokeWidth="1.5"><path d="M10 1V19M1 10H19M7 4L10 1L13 4M7 16L10 19L13 16M4 7L1 10L4 13M16 7L19 10L16 13" /></svg></IconButton>
              <IconButton aria-label="复制"><svg width="20" height="20" viewBox="0 0 20 20" fill="none" stroke="#eee" strokeWidth="1.5"><rect x="6" y="1.5" width="12" height="12" rx="3" /><path d="M4 6H3A2 2 0 0 0 1.5 8V16A2 2 0 0 0 3.5 18H12A2 2 0 0 0 14 16" /></svg></IconButton>
              <IconButton aria-label="粘贴"><svg width="20" height="20" viewBox="0 0 20 20" fill="none" stroke="#eee" strokeWidth="1.5"><path d="M7 18H4A2 2 0 0 1 2 16V5A2 2 0 0 1 4 3H12A2 2 0 0 1 14 5V7" /><rect x="5" y="1" width="6" height="4" rx="1" /><path d="M8 9H15L18 12V18H8Z" /></svg></IconButton>
            </FloatIcons>
          </Floating>
          <Watermark>
            <WatermarkTitle>激活 Windows</WatermarkTitle>
            转到“设置”以激活 Windows。
          </Watermark>
        </Viewer>
        <Edge><GreenGrip /></Edge>
      </Desktop>
    </>
  );
}
